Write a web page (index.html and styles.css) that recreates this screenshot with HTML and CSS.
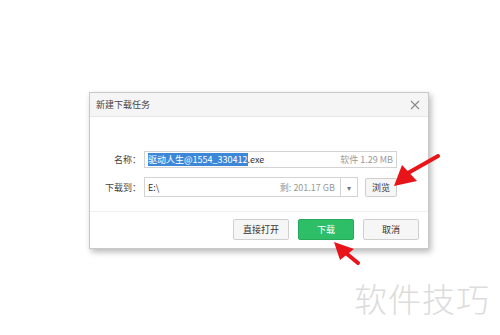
FILE: index.html
```html
<!DOCTYPE html>
<html lang="zh-CN">
<head>
  <meta charset="UTF-8" />
  <title>新建下载任务</title>
  <link rel="stylesheet" href="styles.css">
</head>
<body>
  <div class="dialog">
    <div class="dialog-title">
      <span>新建下载任务</span>
      <svg class="close" width="10" height="10" viewBox="0 0 10 10"><path d="M1 1L9 9M9 1L1 9" stroke="#8a8a8a" stroke-width="1.1"/></svg>
    </div>
    <div class="dialog-body">
      <div class="row">
        <label class="row-label">名称：</label>
        <div class="field name-field">
          <span class="file-name"><span class="selected">驱动人生@1554_330412</span>.exe</span>
          <span class="hint">软件 1.29 MB</span>
        </div>
      </div>
      <div class="row">
        <label class="row-label">下载到：</label>
        <div class="field dir-field">
          <span class="file-name">E:\</span>
          <span class="hint">剩: 201.17 GB</span>
          <span class="drop">▾</span>
        </div>
        <button class="btn browse">浏览</button>
      </div>
    </div>
    <div class="dialog-footer">
      <button class="btn">直接打开</button>
      <button class="btn primary">下载</button>
      <button class="btn">取消</button>
    </div>
  </div>

  <svg class="arrows" width="500" height="335" viewBox="0 0 500 335">
    <path d="M438 156L408 173" stroke="#e8141a" stroke-width="4" stroke-linecap="round"/>
    <path d="M394 186L402 165L417 181Z" fill="#e8141a"/>
    <path d="M358 263L347 254" stroke="#e8141a" stroke-width="4" stroke-linecap="round"/>
    <path d="M334 242L354 249L340 260Z" fill="#e8141a"/>
  </svg>

  <div class="watermark">软件技巧</div>
</body>
</html>
```

FILE: styles.css
```css
body {
  margin: 0;
  padding: 92px 0 0 89px;
  width: 500px;
  height: 335px;
  box-sizing: border-box;
  background: #fff;
  font-family: "Microsoft YaHei", "Noto Sans CJK SC", sans-serif;
  font-size: 9px;
  color: #333;
  position: relative;
  overflow: hidden;
}

.dialog {
  width: 340px;
  height: 157px;
  box-sizing: border-box;
  border: 1px solid #c9c9c9;
  background: #fff;
  box-shadow: 2px 3px 6px rgba(0, 0, 0, 0.28);
  display: flex;
  flex-direction: column;
}

.dialog-title {
  height: 23px;
  background: #f5f5f5;
  border-bottom: 1px solid #e8e8e8;
  display: flex;
  align-items: center;
  justify-content: space-between;
  padding: 0 8px 0 6px;
  color: #444;
}

.dialog-body {
  flex: 1;
  padding: 34px 0 0 0;
  display: flex;
  flex-direction: column;
  gap: 9px;
}

.row {
  display: flex;
  align-items: center;
}

.row-label {
  width: 51px;
  text-align: right;
  margin-right: 3px;
  color: #444;
}

.field {
  height: 18px;
  box-sizing: border-box;
  border: 1px solid #d3d3d3;
  display: flex;
  align-items: center;
  padding-left: 3px;
  color: #333;
}

.name-field {
  width: 253px;
  height: 17px;
  padding-right: 3px;
}

.dir-field {
  width: 214px;
  height: 20px;
}

.file-name {
  flex: 1;
}

.selected {
  background: #3d87d8;
  color: #fff;
}

.hint {
  color: #999;
}

.drop {
  width: 16px;
  height: 18px;
  margin-left: 5px;
  border-left: 1px solid #d3d3d3;
  display: flex;
  align-items: center;
  justify-content: center;
  color: #777;
  font-size: 8px;
}

.btn {
  font: inherit;
  color: #333;
  background: #f6f6f6;
  border: 1px solid #cfcfcf;
  border-radius: 2px;
  padding: 0;
}

.browse {
  width: 32px;
  height: 19px;
  margin-left: 7px;
}

.dialog-footer {
  height: 34px;
  border-top: 1px solid #f0f0f0;
  display: flex;
  align-items: center;
  justify-content: flex-end;
  gap: 9px;
  padding: 0 9px 2px 0;
}

.dialog-footer .btn {
  width: 56px;
  height: 21px;
}

.btn.primary {
  background: #2fbe68;
  border-color: #27a95b;
  color: #fff;
}

.arrows {
  position: absolute;
  left: 0;
  top: 0;
}

.watermark {
  position: absolute;
  left: 354px;
  top: 274px;
  font-size: 33px;
  font-weight: 300;
  color: #dcdcdc;
  letter-spacing: 1px;
  font-family: "Noto Sans CJK SC", sans-serif;
}
```
